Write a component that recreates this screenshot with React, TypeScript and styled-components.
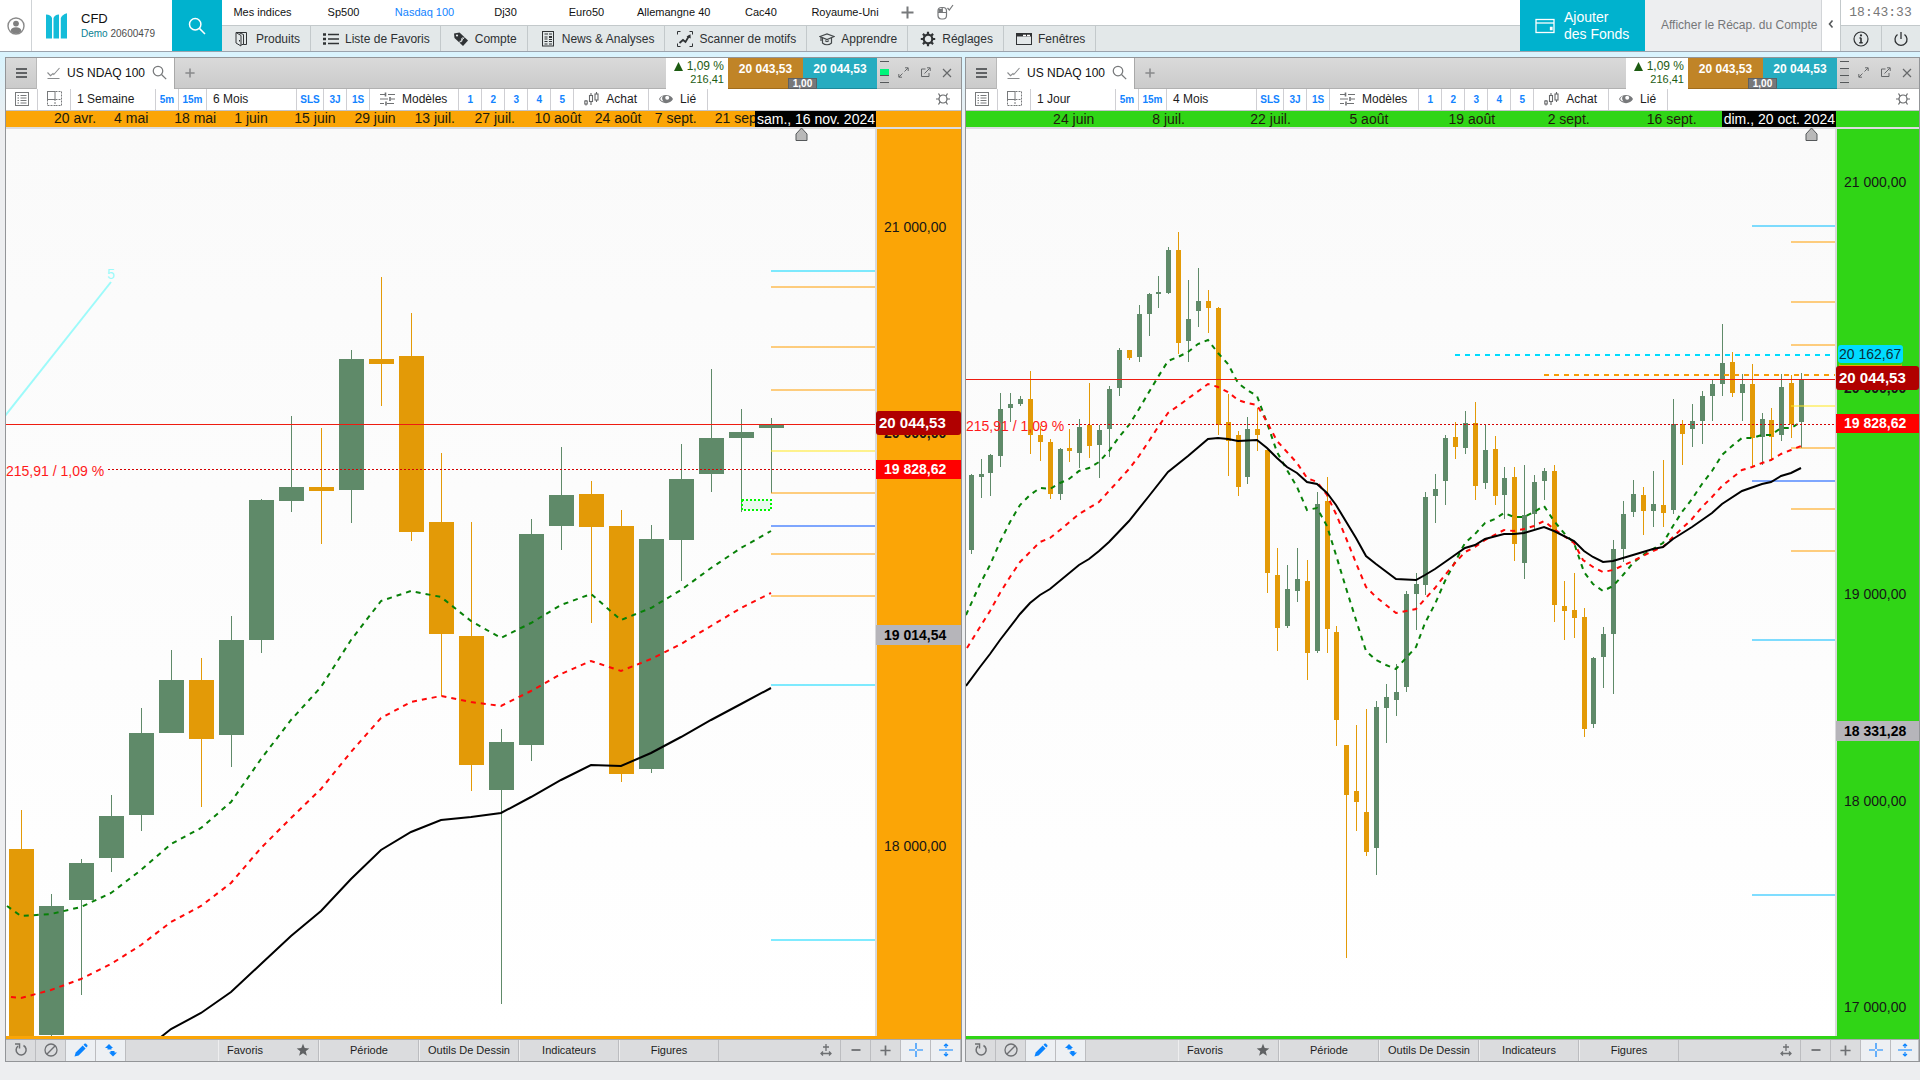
import React from "react";
import styled, { createGlobalStyle, css } from "styled-components";

/* ------------------------------------------------------------------ */
/* Types and data                                                      */
/* ------------------------------------------------------------------ */

type Point = [number, number];
/** x of the wick, rising (1) or falling (0), high, body top, body bottom, low */
type Candle = [number, 0 | 1, number, number, number, number];

interface Level {
  from: number;
  y: number;
  color: string;
}

interface AxisTag {
  y: number;
  text: string;
  kind: "plain" | "bold" | "current" | "previous" | "cursor" | "line";
}

interface DateLabel {
  x: number;
  text: string;
}

interface ChartData {
  title: string;
  interval: string;
  range: string;
  accent: string;
  axisWidth: number;
  originX: number;
  bodyWidth: number;
  labelHeight: number;
  signalOn: boolean;
  dates: DateLabel[];
  cursorDate: string;
  markerX: number;
  candles: Candle[];
  fast: Point[];
  medium: Point[];
  slow: Point[];
  levels: Level[];
  dashed: Level[];
  currentY: number;
  previousY: number;
  axis: AxisTag[];
  wave?: { from: Point; to: Point; text: string };
  zone?: { x: number; y: number; width: number; height: number };
}

const PLOT_TOP = 129;
const PLOT_WIDTH = 869;
const PLOT_HEIGHT = 907;

const CYAN = "rgba(0, 215, 255, 0.5)";
const SKY = "rgba(0, 187, 255, 0.5)";
const AMBER = "rgba(255, 157, 0, 0.5)";
const YELLOW = "rgba(255, 232, 30, 0.5)";
const BLUE = "rgba(0, 80, 255, 0.5)";

const weeklyXs = (values: number[], first = 0): Point[] =>
  values.map((y, i) => [21 + 30 * (first + i), y]);

const weekly: ChartData = {
  title: "US NDAQ 100",
  interval: "1 Semaine",
  range: "6 Mois",
  accent: "#fba506",
  axisWidth: 84,
  originX: 6,
  bodyWidth: 25,
  labelHeight: 14,
  signalOn: true,
  dates: [
    { x: 54, text: "20 avr." },
    { x: 114, text: "4 mai" },
    { x: 174, text: "18 mai" },
    { x: 234, text: "1 juin" },
    { x: 294, text: "15 juin" },
    { x: 354, text: "29 juin" },
    { x: 414, text: "13 juil." },
    { x: 474, text: "27 juil." },
    { x: 534, text: "10 août" },
    { x: 594, text: "24 août" },
    { x: 654, text: "7 sept." },
    { x: 714, text: "21 sept." },
  ],
  cursorDate: "sam., 16 nov. 2024",
  markerX: 801,
  candles: [
    [21, 0, 810, 849, 1040, 1040],
    [51, 1, 894, 906, 1035, 1036],
    [81, 1, 859, 863, 900, 995],
    [111, 1, 795, 816, 858, 872],
    [141, 1, 708, 733, 815, 831],
    [171, 1, 650, 680, 733, 733],
    [201, 0, 658, 680, 739, 807],
    [231, 1, 616, 640, 735, 767],
    [261, 1, 499, 500, 640, 653],
    [291, 1, 416, 487, 501, 512],
    [321, 0, 428, 487, 491, 544],
    [351, 1, 350, 359, 490, 523],
    [381, 0, 277, 359, 364, 406],
    [411, 0, 313, 356, 532, 541],
    [441, 0, 453, 522, 634, 696],
    [471, 0, 522, 636, 765, 791],
    [501, 1, 729, 742, 790, 1004],
    [531, 1, 519, 534, 745, 761],
    [561, 1, 447, 495, 526, 550],
    [591, 0, 481, 494, 527, 623],
    [621, 0, 510, 526, 774, 782],
    [651, 1, 525, 539, 769, 773],
    [681, 1, 444, 479, 540, 581],
    [711, 1, 369, 438, 474, 492],
    [741, 1, 409, 432, 438, 512],
    [771, 1, 418, 425, 428, 493],
  ],
  fast: [
    [7, 906],
    ...weeklyXs([
      916, 914, 907, 893, 870, 844, 828, 802, 759, 720, 687, 640, 601, 591, 597, 621, 638, 623,
      605, 594, 620, 608, 590, 568, 548, 531,
    ]),
  ],
  medium: [
    [11, 997],
    ...weeklyXs([
      998, 990, 979, 964, 945, 922, 906, 883, 848, 818, 789, 752, 718, 702, 696, 702, 706, 691,
      674, 661, 671, 659, 644, 626, 608, 593,
    ]),
  ],
  slow: [
    [161, 1037],
    ...weeklyXs(
      [
        1029, 1013, 992, 964, 936, 911, 879, 850, 832, 820, 817, 813, 797, 780, 765, 766, 753, 737,
        720, 704, 688,
      ],
      5
    ),
  ],
  levels: [
    { from: 771, y: 271, color: CYAN },
    { from: 771, y: 287, color: AMBER },
    { from: 771, y: 347, color: AMBER },
    { from: 771, y: 390, color: AMBER },
    { from: 771, y: 451, color: YELLOW },
    { from: 771, y: 493, color: AMBER },
    { from: 771, y: 526, color: BLUE },
    { from: 771, y: 554, color: AMBER },
    { from: 771, y: 596, color: AMBER },
    { from: 771, y: 685, color: CYAN },
    { from: 771, y: 940, color: CYAN },
  ],
  dashed: [],
  currentY: 424,
  previousY: 469,
  axis: [
    { y: 227, text: "21 000,00", kind: "plain" },
    { y: 433, text: "20 000,00", kind: "bold" },
    { y: 846, text: "18 000,00", kind: "plain" },
    { y: 423, text: "20 044,53", kind: "current" },
    { y: 469, text: "19 828,62", kind: "previous" },
    { y: 635, text: "19 014,54", kind: "cursor" },
  ],
  wave: { from: [5, 416], to: [111, 282], text: "5" },
  zone: { x: 742, y: 500, width: 29, height: 10 },
};

const daily: ChartData = {
  title: "US NDAQ 100",
  interval: "1 Jour",
  range: "4 Mois",
  accent: "#30d516",
  axisWidth: 82,
  originX: 966,
  bodyWidth: 5,
  labelHeight: 16,
  signalOn: false,
  dates: [
    { x: 1053, text: "24 juin" },
    { x: 1152, text: "8 juil." },
    { x: 1250, text: "22 juil." },
    { x: 1349, text: "5 août" },
    { x: 1448, text: "19 août" },
    { x: 1547, text: "2 sept." },
    { x: 1646, text: "16 sept." },
  ],
  cursorDate: "dim., 20 oct. 2024",
  markerX: 1811,
  candles: [
    [971, 1, 474, 475, 550, 554],
    [981, 1, 459, 474, 477, 498],
    [990, 1, 454, 455, 473, 496],
    [1000, 1, 393, 409, 456, 467],
    [1010, 1, 393, 404, 408, 422],
    [1020, 1, 396, 399, 404, 406],
    [1030, 0, 371, 399, 435, 454],
    [1040, 0, 426, 435, 442, 461],
    [1050, 0, 439, 442, 494, 499],
    [1060, 1, 448, 449, 494, 500],
    [1069, 0, 429, 448, 451, 462],
    [1079, 1, 419, 427, 453, 468],
    [1089, 0, 383, 425, 446, 458],
    [1099, 1, 425, 430, 445, 478],
    [1109, 1, 386, 389, 429, 457],
    [1119, 1, 348, 350, 388, 396],
    [1129, 0, 350, 350, 358, 360],
    [1139, 1, 305, 314, 357, 362],
    [1149, 1, 293, 294, 314, 336],
    [1158, 1, 276, 292, 294, 308],
    [1168, 1, 247, 250, 293, 294],
    [1178, 0, 232, 250, 343, 354],
    [1188, 1, 280, 319, 341, 362],
    [1198, 1, 268, 301, 311, 327],
    [1208, 0, 290, 301, 308, 333],
    [1218, 0, 307, 308, 425, 435],
    [1228, 0, 394, 422, 441, 476],
    [1238, 0, 431, 435, 487, 496],
    [1247, 1, 417, 429, 477, 484],
    [1257, 0, 408, 429, 435, 451],
    [1267, 0, 450, 450, 573, 593],
    [1277, 0, 548, 575, 628, 651],
    [1287, 1, 565, 589, 626, 628],
    [1297, 1, 548, 579, 591, 602],
    [1307, 0, 560, 581, 653, 680],
    [1317, 1, 492, 504, 651, 653],
    [1327, 0, 477, 501, 629, 653],
    [1336, 0, 626, 632, 720, 746],
    [1346, 0, 745, 745, 795, 958],
    [1356, 0, 725, 791, 802, 831],
    [1366, 0, 709, 812, 852, 856],
    [1376, 1, 701, 707, 848, 875],
    [1386, 1, 684, 697, 708, 743],
    [1396, 1, 664, 692, 700, 716],
    [1406, 1, 591, 594, 687, 692],
    [1416, 1, 573, 584, 594, 630],
    [1425, 1, 492, 497, 585, 595],
    [1435, 1, 474, 489, 496, 523],
    [1445, 1, 435, 438, 481, 505],
    [1455, 0, 422, 437, 447, 459],
    [1465, 1, 411, 423, 448, 454],
    [1475, 0, 402, 423, 486, 500],
    [1485, 1, 425, 450, 483, 489],
    [1495, 0, 436, 449, 496, 505],
    [1504, 1, 467, 478, 495, 519],
    [1514, 0, 467, 477, 544, 561],
    [1524, 1, 465, 515, 563, 579],
    [1534, 1, 475, 482, 514, 529],
    [1544, 1, 468, 471, 481, 500],
    [1554, 0, 465, 471, 605, 622],
    [1564, 0, 581, 606, 611, 640],
    [1574, 0, 573, 610, 618, 638],
    [1584, 0, 608, 617, 729, 737],
    [1593, 1, 657, 658, 724, 728],
    [1603, 1, 627, 634, 657, 688],
    [1613, 1, 540, 549, 634, 694],
    [1623, 1, 501, 514, 549, 562],
    [1633, 1, 480, 494, 512, 517],
    [1643, 0, 487, 495, 511, 535],
    [1653, 1, 471, 504, 511, 527],
    [1663, 0, 460, 505, 513, 527],
    [1673, 1, 399, 424, 510, 514],
    [1682, 0, 420, 424, 434, 465],
    [1692, 1, 404, 421, 429, 447],
    [1702, 1, 391, 396, 421, 444],
    [1712, 1, 380, 384, 396, 421],
    [1722, 1, 324, 363, 384, 396],
    [1732, 0, 352, 362, 393, 397],
    [1742, 1, 374, 384, 393, 421],
    [1752, 0, 364, 384, 438, 467],
    [1762, 1, 413, 419, 437, 465],
    [1771, 0, 408, 420, 437, 461],
    [1781, 1, 374, 387, 435, 441],
    [1791, 0, 375, 383, 424, 438],
    [1801, 1, 373, 379, 422, 448],
  ],
  fast: [
    [966, 615], [980, 584], [990, 565], [1000, 542], [1010, 522], [1020, 505], [1030, 495],
    [1040, 488], [1050, 489], [1060, 483], [1069, 479], [1079, 471], [1089, 468], [1099, 462],
    [1109, 451], [1119, 437], [1129, 425], [1139, 409], [1149, 392], [1158, 377], [1168, 361],
    [1178, 357], [1188, 352], [1198, 344], [1208, 340], [1218, 353], [1228, 364], [1238, 383],
    [1247, 390], [1257, 396], [1267, 423], [1277, 452], [1287, 470], [1297, 487], [1307, 510],
    [1317, 508], [1327, 526], [1336, 555], [1346, 588], [1356, 620], [1366, 651], [1376, 660],
    [1386, 665], [1396, 669], [1406, 658], [1416, 647], [1425, 623], [1435, 604], [1445, 581],
    [1455, 562], [1465, 543], [1475, 534], [1485, 523], [1495, 519], [1504, 513], [1514, 517],
    [1524, 517], [1534, 512], [1544, 506], [1554, 521], [1564, 533], [1574, 543], [1584, 572],
    [1593, 584], [1603, 591], [1613, 586], [1623, 575], [1633, 563], [1643, 555], [1653, 549],
    [1663, 543], [1673, 526], [1682, 512], [1692, 499], [1702, 484], [1712, 471], [1722, 455],
    [1732, 446], [1742, 438], [1752, 438], [1762, 435], [1771, 435], [1781, 428], [1791, 428],
    [1801, 422],
  ],
  medium: [
    [967, 648], [980, 627], [990, 611], [1000, 593], [1010, 577], [1020, 562], [1040, 542],
    [1050, 538], [1060, 530], [1079, 514], [1089, 508], [1099, 502], [1109, 491], [1129, 469],
    [1139, 456], [1149, 441], [1158, 427], [1168, 413], [1178, 406], [1208, 384], [1218, 387],
    [1228, 392], [1238, 400], [1247, 403], [1257, 405], [1267, 422], [1277, 441], [1287, 452],
    [1297, 463], [1307, 478], [1317, 482], [1327, 495], [1336, 514], [1346, 538], [1356, 563],
    [1366, 587], [1376, 597], [1386, 605], [1396, 613], [1416, 609], [1425, 599], [1435, 588],
    [1445, 575], [1455, 563], [1465, 552], [1475, 547], [1485, 540], [1504, 530], [1514, 531],
    [1524, 529], [1534, 526], [1544, 521], [1554, 529], [1574, 543], [1583, 560], [1593, 567],
    [1603, 572], [1613, 570], [1633, 561], [1653, 551], [1663, 547], [1673, 537], [1692, 519],
    [1702, 507], [1712, 497], [1722, 486], [1742, 470], [1752, 467], [1762, 463], [1771, 460],
    [1781, 454], [1791, 450], [1801, 446],
  ],
  slow: [
    [966, 686], [980, 667], [990, 654], [1000, 640], [1020, 614], [1030, 603], [1040, 595],
    [1050, 589], [1079, 565], [1089, 559], [1099, 551], [1109, 542], [1129, 521], [1149, 496],
    [1168, 472], [1188, 456], [1208, 439], [1218, 438], [1228, 439], [1238, 441], [1257, 440],
    [1267, 448], [1277, 458], [1287, 467], [1297, 473], [1307, 482], [1317, 484], [1327, 493],
    [1336, 505], [1356, 538], [1366, 556], [1376, 564], [1396, 579], [1416, 580], [1425, 575],
    [1435, 569], [1445, 562], [1465, 548], [1475, 545], [1485, 539], [1504, 534], [1514, 534],
    [1524, 533], [1544, 527], [1554, 531], [1574, 541], [1584, 551], [1593, 557], [1603, 562],
    [1613, 561], [1633, 555], [1653, 549], [1663, 547], [1673, 539], [1692, 527], [1712, 513],
    [1722, 504], [1742, 491], [1762, 484], [1771, 482], [1781, 476], [1791, 473], [1801, 468],
  ],
  levels: [
    { from: 1752, y: 226, color: SKY },
    { from: 1791, y: 242, color: AMBER },
    { from: 1791, y: 302, color: AMBER },
    { from: 1791, y: 345, color: AMBER },
    { from: 1791, y: 406, color: YELLOW },
    { from: 1791, y: 448, color: AMBER },
    { from: 1752, y: 481, color: BLUE },
    { from: 1791, y: 509, color: AMBER },
    { from: 1791, y: 551, color: AMBER },
    { from: 1752, y: 640, color: SKY },
    { from: 1752, y: 895, color: SKY },
  ],
  dashed: [
    { from: 1455, y: 355, color: "#00dcff" },
    { from: 1544, y: 375, color: "#f79d06" },
  ],
  currentY: 379,
  previousY: 424,
  axis: [
    { y: 182, text: "21 000,00", kind: "plain" },
    { y: 388, text: "20 000,00", kind: "bold" },
    { y: 594, text: "19 000,00", kind: "plain" },
    { y: 801, text: "18 000,00", kind: "plain" },
    { y: 1007, text: "17 000,00", kind: "plain" },
    { y: 354, text: "20 162,67", kind: "line" },
    { y: 378, text: "20 044,53", kind: "current" },
    { y: 423, text: "19 828,62", kind: "previous" },
    { y: 731, text: "18 331,28", kind: "cursor" },
  ],
};

/* ------------------------------------------------------------------ */
/* Styles                                                              */
/* ------------------------------------------------------------------ */

const GlobalStyle = createGlobalStyle`
  * { box-sizing: border-box; }
  body {
    margin: 0;
    font-family: "Liberation Sans", Arial, sans-serif;
    font-size: 12px;
    color: #1c1c1c;
    background: #edeef0;
  }
  button {
    margin: 0;
    padding: 0;
    border: 0;
    background: none;
    color: inherit;
    font: inherit;
    white-space: nowrap;
    cursor: pointer;
  }
  svg { display: block; flex: none; }
`;

const Page = styled.div`
  display: flex;
  flex-direction: column;
  min-height: 100vh;
  background: linear-gradient(#d9f3fd 56px, #edeef0 128px);
`;

const Header = styled.header`
  display: flex;
  height: 52px;
  background: #fff;
  border-bottom: 1px solid #9ba3ad;
`;

const UserButton = styled.button`
  display: flex;
  align-items: center;
  justify-content: center;
  width: 32px;
  border-right: 1px solid #cfd3d6;
`;

const Brand = styled.div`
  display: flex;
  align-items: center;
  gap: 14px;
  width: 140px;
  padding-left: 14px;
`;

const AccountName = styled.div`
  font-size: 13px;
  line-height: 16px;
  color: #111;
`;

const AccountNumber = styled.div`
  font-size: 10px;
  line-height: 14px;
  white-space: nowrap;
  color: #4c4c4c;
  span { color: #0a7f93; }
`;

const SearchButton = styled.button`
  display: flex;
  align-items: center;
  justify-content: center;
  width: 50px;
  background: #00b2ce;
`;

const Navigation = styled.div`
  display: flex;
  flex: 1;
  flex-direction: column;
  min-width: 0;
`;

const QuickLinks = styled.nav`
  display: flex;
  height: 26px;
  border-bottom: 1px solid #c3c9cb;
`;

const QuickLink = styled.a<{ $active?: boolean }>`
  min-width: 81px;
  padding: 0 10px;
  font-size: 11px;
  line-height: 25px;
  text-align: center;
  text-decoration: none;
  white-space: nowrap;
  color: ${(p) => (p.$active ? "#1283ff" : "#111")};
`;

const QuickAction = styled.button`
  display: flex;
  align-items: center;
  justify-content: center;
  width: 38px;
`;

const MainMenu = styled.nav`
  display: flex;
  flex: 1;
  background: #e3e8e9;
`;

const MenuButton = styled.button`
  display: flex;
  align-items: center;
  gap: 6px;
  padding: 0 10px 0 12px;
  border-right: 1px solid #c3c9cb;
  color: #2e3133;
`;

const FundsButton = styled.button`
  display: flex;
  align-items: center;
  gap: 9px;
  width: 125px;
  padding-left: 15px;
  background: #00b2ce;
  color: #fff;
  font-size: 14px;
  line-height: 17px;
  text-align: left;
`;

const RecapButton = styled.button`
  width: 177px;
  padding: 0 10px 2px 16px;
  background: #edeef0;
  border-right: 1px solid #d2d5d8;
  color: #757779;
`;

const CollapseButton = styled.button`
  display: flex;
  align-items: center;
  justify-content: center;
  width: 19px;
  padding-bottom: 4px;
  border-right: 1px solid #c3c9cb;
`;

const Status = styled.div`
  display: flex;
  flex-direction: column;
  width: 79px;
`;

const Clock = styled.time`
  height: 26px;
  border-bottom: 1px solid #c3c9cb;
  font-family: "Liberation Mono", monospace;
  font-size: 13px;
  line-height: 26px;
  text-align: center;
  color: #777;
`;

const StatusActions = styled.div`
  display: grid;
  flex: 1;
  grid-template-columns: 1fr 1fr;
  background: #e3e8e9;
`;

const StatusButton = styled.button`
  display: flex;
  align-items: center;
  justify-content: center;
  & + & { border-left: 1px solid #c3c9cb; }
`;

const Workspace = styled.main`
  display: grid;
  flex: 1;
  grid-template-columns: minmax(0, 957fr) minmax(0, 955fr);
  gap: 3px;
  padding: 5px 0 18px 5px;
`;

const Panel = styled.section`
  display: flex;
  flex-direction: column;
  min-width: 0;
  min-height: 600px;
  border: 1px solid #939598;
  background: #fff;
`;

const TabBar = styled.div`
  display: flex;
  height: 31px;
  background: linear-gradient(#dadada, #cacaca);
  box-shadow: inset 0 -1px #b1b1b1;
`;

const TabMenuButton = styled.button`
  display: flex;
  align-items: center;
  justify-content: center;
  width: 31px;
  padding-bottom: 2px;
  border-right: 1px solid #b9b9b9;
`;

const Tab = styled.button`
  display: flex;
  align-items: center;
  gap: 7px;
  width: 138px;
  padding: 0 0 2px 10px;
  background: #fff;
  border-right: 1px solid #a9a9a9;
  color: #111;
`;

const AddTabButton = styled.button`
  display: flex;
  align-items: center;
  justify-content: center;
  width: 30px;
  padding-bottom: 2px;
`;

const Spacer = styled.div`
  flex: 1;
`;

const Change = styled.div`
  display: flex;
  flex-direction: column;
  align-items: flex-end;
  width: 62px;
  padding: 2px 4px 0 0;
  background: #fff;
  color: #1d5c12;
  font-size: 11px;
  line-height: 13px;
`;

const ChangePercent = styled.div`
  display: flex;
  align-items: center;
  gap: 4px;
  font-size: 12px;
`;

const Quote = styled.div`
  position: relative;
  display: grid;
  grid-template-columns: 75px 74px;
`;

const QuoteButton = styled.button<{ $side: "sell" | "buy" }>`
  padding-bottom: 8px;
  background: ${(p) => (p.$side === "sell" ? "#c08427" : "#27acc0")};
  border-bottom: 1px solid ${(p) => (p.$side === "sell" ? "#a06c1c" : "#1d8a9b")};
  color: #fff;
  font-weight: bold;
`;

const Spread = styled.span`
  position: absolute;
  bottom: 0;
  left: 60px;
  width: 29px;
  height: 11px;
  border: 1px solid #5d6063;
  background: #76787b;
  color: #fff;
  font-size: 10px;
  font-weight: bold;
  line-height: 10px;
  text-align: center;
`;

const WindowTools = styled.div<{ $width: number }>`
  display: flex;
  align-items: center;
  width: ${(p) => p.$width}px;
  padding: 0 0 2px 2px;
`;

const WindowButton = styled.button`
  display: flex;
  align-items: center;
  justify-content: center;
  width: 22px;
  height: 22px;
  &:first-of-type { margin-left: 2px; }
`;

const Toolbar = styled.div`
  display: flex;
  height: 22px;
  border-bottom: 1px solid #c4c4c8;
  background: #fff;
`;

const toolCell = css`
  display: flex;
  align-items: center;
  padding-bottom: 2px;
  border-right: 1px solid #cfcfd3;
`;

const IconCell = styled.button<{ $width: number }>`
  ${toolCell}
  justify-content: center;
  width: ${(p) => p.$width}px;
`;

const TextCell = styled.button<{ $width: number }>`
  ${toolCell}
  width: ${(p) => p.$width}px;
  padding-left: 6px;
`;

const ShortcutCell = styled.button<{ $width: number }>`
  ${toolCell}
  justify-content: center;
  width: ${(p) => p.$width}px;
  padding-bottom: 0;
  color: #1283ff;
  font-size: 10px;
  font-weight: bold;
`;

const ActionCell = styled.button`
  ${toolCell}
  gap: 7px;
  padding-right: 11px;
  padding-left: 10px;
`;

const SettingsSlot = styled.div<{ $width: number }>`
  display: flex;
  align-items: center;
  width: ${(p) => p.$width}px;
  padding-bottom: 2px;
  padding-left: 58px;
`;

const DateStrip = styled.div<{ $accent: string }>`
  display: flex;
  height: 18px;
  border-bottom: 2px solid #dcdcde;
  background: ${(p) => p.$accent};
`;

const DateTrack = styled.div`
  position: relative;
  flex: 1;
`;

const DateTick = styled.span<{ $height: number }>`
  position: absolute;
  top: 0;
  font-size: 14px;
  line-height: ${(p) => p.$height}px;
  white-space: nowrap;
  color: #201a0c;
`;

const CursorDate = styled.span`
  position: absolute;
  top: 0;
  right: 0;
  padding: 0 1px 0 2px;
  background: #000;
  color: #fff;
  font-size: 14px;
  line-height: 16px;
  white-space: nowrap;
`;

const AxisCorner = styled.div<{ $width: number }>`
  width: ${(p) => p.$width + 1}px;
`;

const ChartBody = styled.div<{ $accent: string }>`
  display: flex;
  flex: 1;
  border-bottom: 3px solid ${(p) => p.$accent};
`;

const Plot = styled.div`
  position: relative;
  flex: 1;
  min-width: 0;
  background: linear-gradient(#fafafa, #fff);
`;

const PlotDrawing = styled.svg`
  position: absolute;
  top: 0;
  left: 0;
  width: 100%;
  height: 100%;
`;

const ChangeNote = styled.span`
  position: absolute;
  left: 0;
  font-size: 14px;
  line-height: 16px;
  white-space: nowrap;
  color: #ff1a1a;
`;

const WaveNote = styled.span`
  position: absolute;
  font-size: 14px;
  line-height: 16px;
  color: #9dfafa;
`;

const Marker = styled.svg`
  position: absolute;
  top: -2px;
`;

const Axis = styled.div<{ $accent: string; $width: number }>`
  position: relative;
  width: ${(p) => p.$width + 2}px;
  border-left: 2px solid #d9d9db;
  background: ${(p) => p.$accent};
`;

const tagKinds = {
  plain: css`
    left: 7px;
    line-height: 16px;
    color: #161616;
  `,
  bold: css`
    left: 7px;
    line-height: 16px;
    font-weight: bold;
    color: #161616;
  `,
  current: css`
    left: -1px;
    right: 0;
    padding-left: 3px;
    border-radius: 3px;
    background: #b00000;
    color: #fff;
    font-size: 15px;
    font-weight: bold;
    line-height: 24px;
  `,
  previous: css`
    left: -1px;
    right: 0;
    padding-left: 8px;
    background: #ff0000;
    color: #fff;
    font-weight: bold;
    line-height: 19px;
  `,
  cursor: css`
    left: -1px;
    right: 0;
    padding-left: 8px;
    background: #b6b5ba;
    color: #000;
    font-weight: bold;
    line-height: 20px;
  `,
  line: css`
    left: 1px;
    padding: 0 2px 0 1px;
    border-radius: 3px;
    background: #00dcff;
    color: #08303a;
    line-height: 18px;
    box-shadow: 0 3px 0 -1px #30d516, 0 5px 0 -1px #f79d06;
  `,
};

const tagHeights: Record<AxisTag["kind"], number> = {
  plain: 16,
  bold: 16,
  current: 24,
  previous: 19,
  cursor: 20,
  line: 18,
};

const Tag = styled.span<{ $kind: AxisTag["kind"] }>`
  position: absolute;
  font-size: 14px;
  white-space: nowrap;
  ${(p) => tagKinds[p.$kind]}
`;

const BottomBar = styled.div`
  display: flex;
  height: 22px;
  border-top: 1px solid #a9aaad;
  background: #dbdcde;
`;

const BottomIcon = styled.button<{ $on?: boolean; $width?: number }>`
  display: flex;
  align-items: center;
  justify-content: center;
  width: ${(p) => p.$width ?? 30}px;
  padding-bottom: 1px;
  border-right: 1px solid #bcbdc0;
  background: ${(p) => (p.$on ? "#edf0f3" : "transparent")};
  color: ${(p) => (p.$on ? "#0a84ff" : "#6d6f72")};
`;

const BottomTabs = styled.div`
  display: grid;
  grid-template-columns: repeat(5, 100px);
  border-left: 1px solid #eeeeef;
`;

const BottomTab = styled.button<{ $spread?: boolean }>`
  display: flex;
  align-items: center;
  justify-content: ${(p) => (p.$spread ? "space-between" : "center")};
  padding: ${(p) => (p.$spread ? "0 8px 2px 8px" : "0 0 2px")};
  border-right: 1px solid #bcbdc0;
  font-size: 11px;
  color: #1c1c1c;
  &:not(:first-child) { border-left: 1px solid #eeeeef; }
`;

/* ------------------------------------------------------------------ */
/* Icons                                                               */
/* ------------------------------------------------------------------ */

interface IconProps {
  w?: number;
  h?: number;
  color?: string;
  sw?: number;
  children: React.ReactNode;
}

const Icon = ({ w = 16, h = 16, color = "currentColor", sw = 1, children }: IconProps) => (
  <svg width={w} height={h} viewBox={`0 0 ${w} ${h}`} fill="none" stroke={color} strokeWidth={sw} aria-hidden="true">
    {children}
  </svg>
);

const UserIcon = () => (
  <Icon w={18} h={18} color="#8a8a8a" sw={1.4}>
    <circle cx="9" cy="9" r="8" />
    <circle cx="9" cy="6.6" r="2.9" fill="#808080" stroke="none" />
    <path d="M3.6 14.2c.3-3 2.2-4 5.4-4s5.1 1 5.4 4c-1.5 1.6-3.3 2.300-5.4 2.300s-3.900-.7-5.400-2.300z" fill="#808080" stroke="none" />
  </Icon>
);

const LogoIcon = () => (
  <Icon w={21} h={26} color="none">
    <path d="M0 1.500c3.500.3 5 1.200 6 3.500v20.500H0z" fill="#14bcd9" />
    <path d="M7.500 5C8.500 2.700 10 1.800 13 1.500v24H7.500z" fill="#14bcd9" />
    <path d="M14.800 5C15.800 2.700 17.500 1.200 21 .2v25.300h-6.200z" fill="#14bcd9" />
  </Icon>
);

const SearchIcon = ({ color = "#fff", size = 18 }: { color?: string; size?: number }) => (
  <svg width={size} height={size} viewBox="0 0 18 18" fill="none" stroke={color} strokeWidth="1.5" aria-hidden="true">
    <circle cx="7.2" cy="7.2" r="5.700" />
    <path d="M11.400 11.400l5.600 5.600" />
  </svg>
);

const ProductsIcon = () => (
  <Icon color="#303335">
    <path d="M9.500 13.500h3v-12H2v10.500l5 3V4.500l-5-3" />
    <path d="M4.500 1.500l5 2v10h-2" />
    <path d="M5.500 9v1.500" />
  </Icon>
);

const ListIcon = () => (
  <Icon color="#303335" sw={1.6}>
    <path d="M5 3.500h11M5 8h11M5 12.500h11" />
    <path d="M0 3.500h3M0 8h3M0 12.500h3" strokeWidth="2.4" />
  </Icon>
);

const AccountIcon = () => (
  <Icon color="none">
    <path d="M1 2.500L6.500 1.500l8.500 8-5 5.500L1.500 7z" fill="#303335" />
    <circle cx="4" cy="4.500" r="1.1" fill="#e3e8e9" />
    <path d="M10.800 7.300c-1.600-1.200-2.800.4-2 1.600s-.5 2.800-2 1.400M11.400 6.500l-5.200 5" stroke="#e3e8e9" strokeWidth="1" />
  </Icon>
);

const NewsIcon = () => (
  <Icon color="#303335">
    <rect x="2.500" y="0.500" width="11" height="14.500" />
    <path d="M4.500 3h3.500M9 3h3M4.500 6h3M4.500 8h3M4.500 10.500h3M4.500 13h3M9 8.500h3M9 10.500h3M9 13h3" strokeWidth="1.2" />
    <rect x="9" y="5" width="3" height="2" fill="#303335" stroke="none" />
  </Icon>
);

const ScannerIcon = () => (
  <Icon color="#303335">
    <path d="M.5 3.500v-3h3M12.500.5h3v3M15.500 12.500v3h-3M3.500 15.500h-3v-3" />
    <path d="M2.500 12l3.500-3 2.500 2L12 5" strokeWidth="1.8" />
    <path d="M9.500 5.500l4-2.200.2 4.200z" fill="#303335" stroke="none" />
  </Icon>
);

const LearnIcon = () => (
  <Icon color="#45494b" sw={1.2}>
    <path d="M1 5.500L8 3l7 2.500L8 8.500z" />
    <path d="M3.500 7v5c2.500 2.300 6.500 2.300 9 0V7M2 6v4" />
    <path d="M6 9.800l2 .8 2-.8" />
  </Icon>
);

const GearIcon = () => (
  <Icon color="#303335">
    <circle cx="8" cy="8" r="4.300" strokeWidth="2.200" />
    <path d="M8 .8v2.600M8 12.600v2.600M.8 8h2.600M12.600 8h2.600M2.900 2.900l1.900 1.900M11.200 11.200l1.900 1.900M2.900 13.100l1.900-1.900M11.200 4.800l1.900-1.900" strokeWidth="2.200" />
  </Icon>
);

const WindowsIcon = () => (
  <Icon color="#303335">
    <rect x=".5" y="2.500" width="15" height="11" />
    <path d="M.5 4h15" strokeWidth="3" />
    <path d="M7 4.500h3M11 4.500h3" stroke="#fff" strokeWidth="1.500" />
  </Icon>
);

const PlusIcon = ({ size = 13, color = "#77797b" }: { size?: number; color?: string }) => (
  <svg width={size} height={size} viewBox="0 0 13 13" stroke={color} strokeWidth="2" aria-hidden="true">
    <path d="M6.500 .5v12M.5 6.500h12" />
  </svg>
);

const MouseIcon = () => (
  <Icon w={17} h={17} color="#77797b" sw={1.2}>
    <rect x="1" y="3.500" width="8.500" height="11.500" rx="3.500" />
    <path d="M5.200 3.500v5M1 8.500h8.500" />
    <path d="M2 5.500h3v3H2z" fill="#77797b" />
    <path d="M10.500 4l1.800 2L16 1" />
  </Icon>
);

const WalletIcon = () => (
  <Icon w={20} h={16} color="#fff" sw={1.3}>
    <rect x="1" y="1.500" width="18" height="13" />
    <path d="M1 5h18" />
    <path d="M15.500 9.500h1.500v2h-1.500z" fill="#fff" />
  </Icon>
);

const InfoIcon = () => (
  <Icon color="#2e3133" sw={1.2}>
    <circle cx="8" cy="8" r="7" />
    <path d="M8 6.800v5M6.500 7h1.500M6.300 11.800h3.400" strokeWidth="1.600" />
    <circle cx="8" cy="4.400" r="1.100" fill="#2e3133" stroke="none" />
  </Icon>
);

const PowerIcon = () => (
  <Icon color="#2e3133" sw={1.3}>
    <path d="M8 1v7M4.500 3.500a6 6 0 1 0 7 0" />
  </Icon>
);

const HamburgerIcon = () => (
  <Icon w={11} h={12} color="#606264" sw={2}>
    <path d="M0 2h11M0 6h11M0 10h11" />
  </Icon>
);

const TrendIcon = () => (
  <Icon w={13} h={14} color="#8a8c8e" sw={1.1}>
    <path d="M.5 6.500l3 3.200L6 7.500l.8 1L12.500 2M.5 12.500h12" />
  </Icon>
);

const DetailsIcon = () => (
  <Icon w={14} h={14} color="#77797b">
    <rect x=".5" y=".5" width="13" height="13" />
    <path d="M2.500 3.500h1.500M5.500 3.500h6M2.500 6h1.500M5.500 6h6M2.500 8.500h1.500M5.500 8.500h6M2.500 11h1.500M5.500 11h6" />
  </Icon>
);

const LayoutIcon = () => (
  <Icon w={15} h={15} color="#77797b">
    <rect x=".5" y=".5" width="7.500" height="8" />
    <path d="M8.500 .5h6v8h-6M.5 8.500v6h7.500v-6M8.500 14.500h6v-6" strokeDasharray="2 1" />
  </Icon>
);

const SlidersIcon = () => (
  <Icon w={15} h={14} color="#6f7173" sw={1.2}>
    <path d="M0 2.500h5M8 2.500h7M0 7h8M11 7h4M0 11.500h4M7 11.500h7" />
    <path d="M5.500 .5v4M10 5v4M6 9.500v4" strokeWidth="1.600" />
  </Icon>
);

const CandlesIcon = () => (
  <Icon w={15} h={14} color="#66686a" sw={1.1}>
    <path d="M2 8v1M2 12v1.500M7 1v2.500M7 9.500V13M12.500 0v2M12.500 8v2" />
    <rect x=".8" y="9" width="2.400" height="3" />
    <rect x="5.500" y="3.500" width="3" height="6" />
    <rect x="11" y="2" width="3" height="6" />
  </Icon>
);

const EyeIcon = () => (
  <Icon w={14} h={12} color="none">
    <path d="M0 6C2.500.5 11.500.5 14 6 11.500 11.500 2.500 11.500 0 6z" fill="#77797b" />
    <path d="M4 2.800C2.500 5 3 7 4.500 8.500 2.500 8 1.500 7 1.200 6 1.700 4.500 2.800 3.400 4 2.800z" fill="#fff" />
    <circle cx="8.200" cy="4.800" r="2" fill="#fff" />
  </Icon>
);

const CogOutlineIcon = () => (
  <Icon color="#66686a" sw={1.2}>
    <circle cx="8" cy="8" r="4" />
    <path d="M5 5L3.500 2.500M11 5l1.500-2.500M5 11l-1.500 2.500M11 11l1.500 2.500M4 8H1M12 8h3" />
  </Icon>
);

const SignalMeter = ({ on }: { on: boolean }) => (
  <Icon w={11} h={30} color="#55585a">
    <path d="M1 11h9v6H1z" fill={on ? "#00f57a" : "#c6c6c6"} stroke="none" />
    <path d="M1 18h9v5H1zM1 25h9v5H1z" fill="#c6c6c6" stroke="none" />
    <path d={`M1 3.500h9${on ? "" : "M1 10.500h9"}M1 17.500h9M1 24.500h9`} />
  </Icon>
);

const ExpandIcon = () => (
  <Icon w={11} h={11} color="#66686a">
    <path d="M6.500 4.500l3.500-3.500M7 .8h3.200V4M4.500 6.500L1 10M.8 7v3.200H4" />
  </Icon>
);

const PopOutIcon = () => (
  <Icon w={11} h={11} color="#66686a">
    <path d="M5.500 2H1.500v7.500h7.500V6M4.500 6.500L9.800 1.200M7 .8h3.200V4" />
  </Icon>
);

const CloseIcon = () => (
  <Icon w={10} h={10} color="#66686a" sw={1.2}>
    <path d="M1 1l8 8M9 1l-8 8" />
  </Icon>
);

const RedoIcon = () => (
  <Icon sw={1.5}>
    <path d="M5 4a5 5 0 1 0 5.500-.5" />
    <path d="M2 2h4.500v4.500" />
  </Icon>
);

const BlockIcon = () => (
  <Icon sw={1.3}>
    <circle cx="8" cy="8" r="6" />
    <path d="M3.800 12.200l8.400-8.400" />
  </Icon>
);

const PencilIcon = () => (
  <Icon color="none">
    <path d="M1.500 14.500l1.200-4 7-7 2.900 2.900-7 7z" fill="currentColor" />
    <path d="M10.500 2.700l1-1c1-1 3.800 1.600 2.800 2.800l-1 1z" fill="currentColor" />
  </Icon>
);

const UpDownIcon = () => (
  <Icon color="none">
    <path d="M6 2l4 4H8.500v1.500h-4V6H2z" fill="currentColor" />
    <path d="M10 14.500l-4-4h1.500V9h4v1.500H14z" fill="currentColor" />
  </Icon>
);

const StarIcon = () => (
  <Icon w={14} h={14} color="none">
    <path d="M7 .8l1.700 4.300 4.600.3-3.600 2.900 1.200 4.500L7 10.300l-3.900 2.500 1.200-4.500L.7 5.400l4.600-.3z" fill="#606264" />
  </Icon>
);

const FitIcon = () => (
  <Icon w={14} h={14} sw={1.3}>
    <path d="M7 1v7M4 4h6M2 10.500h10M4 8.500l-2 2 2 2M10 8.500l2 2-2 2" />
  </Icon>
);

const MinusIcon = () => (
  <Icon w={12} h={12} sw={1.8}>
    <path d="M1.500 6h9" />
  </Icon>
);

const CrosshairIcon = () => (
  <Icon w={14} h={14} sw={1.2}>
    <path d="M7 0v6M7 8v6M0 7h6M8 7h6" />
  </Icon>
);

const SplitIcon = () => (
  <Icon w={14} h={14} sw={1.2}>
    <path d="M0 7h14M7 1v4M7 9v4M5 3l2-2 2 2M5 11l2 2 2-2" />
  </Icon>
);

/* ------------------------------------------------------------------ */
/* Header                                                              */
/* ------------------------------------------------------------------ */

const quickLinks = ["Mes indices", "Sp500", "Nasdaq 100", "Dj30", "Euro50", "Allemangne 40", "Cac40", "Royaume-Uni"];

const menu: [string, () => React.ReactElement][] = [
  ["Produits", ProductsIcon],
  ["Liste de Favoris", ListIcon],
  ["Compte", AccountIcon],
  ["News & Analyses", NewsIcon],
  ["Scanner de motifs", ScannerIcon],
  ["Apprendre", LearnIcon],
  ["Réglages", GearIcon],
  ["Fenêtres", WindowsIcon],
];

const TopBar = () => (
  <Header>
    <UserButton aria-label="Profil"><UserIcon /></UserButton>
    <Brand>
      <LogoIcon />
      <div>
        <AccountName>CFD</AccountName>
        <AccountNumber><span>Demo</span> 20600479</AccountNumber>
      </div>
    </Brand>
    <SearchButton aria-label="Rechercher"><SearchIcon /></SearchButton>
    <Navigation>
      <QuickLinks>
        {quickLinks.map((name) => (
          <QuickLink key={name} href="#" $active={name === "Nasdaq 100"}>{name}</QuickLink>
        ))}
        <QuickAction aria-label="Ajouter"><PlusIcon /></QuickAction>
        <QuickAction aria-label="Souris"><MouseIcon /></QuickAction>
      </QuickLinks>
      <MainMenu>
        {menu.map(([name, MenuIcon]) => (
          <MenuButton key={name}><MenuIcon />{name}</MenuButton>
        ))}
      </MainMenu>
    </Navigation>
    <FundsButton><WalletIcon /><span>Ajouter<br />des Fonds</span></FundsButton>
    <RecapButton>Afficher le Récap. du Compte</RecapButton>
    <CollapseButton aria-label="Déplier">
      <Icon w={6} h={10} color="#55585a" sw={1.6}><path d="M4.500 1.500L1.500 5l3 3.500" /></Icon>
    </CollapseButton>
    <Status>
      <Clock>18:43:33</Clock>
      <StatusActions>
        <StatusButton aria-label="Informations"><InfoIcon /></StatusButton>
        <StatusButton aria-label="Déconnexion"><PowerIcon /></StatusButton>
      </StatusActions>
    </Status>
  </Header>
);

/* ------------------------------------------------------------------ */
/* Chart                                                               */
/* ------------------------------------------------------------------ */

const UP = "#5f8a69";
const DOWN = "#e39a07";

const toPoints = (points: Point[]) => points.map(([x, y]) => `${x},${y}`).join(" ");
const topPercent = (y: number) => `${((y - PLOT_TOP) / PLOT_HEIGHT) * 100}%`;
const leftPercent = (x: number, origin: number) => `${((x - origin) / PLOT_WIDTH) * 100}%`;

const ChartDrawing = ({ data }: { data: ChartData }) => {
  const left = data.originX;
  const right = left + PLOT_WIDTH;
  const half = (data.bodyWidth - 1) / 2;
  return (
    <PlotDrawing viewBox={`${left} ${PLOT_TOP} ${PLOT_WIDTH} ${PLOT_HEIGHT}`} preserveAspectRatio="none" role="img" aria-label={data.title}>
      {data.candles.map(([x, up, high, top, bottom, low]) => (
        <g key={x} fill={up ? UP : DOWN}>
          <rect x={x} y={high} width={1} height={low - high} />
          <rect x={x - half} y={top} width={data.bodyWidth} height={bottom - top} />
        </g>
      ))}
      {data.levels.map((level) => (
        <rect key={level.y} x={level.from} y={level.y - 1} width={right - level.from} height={2} fill={level.color} />
      ))}
      {data.zone && (
        <rect {...data.zone} fill="rgba(0, 200, 60, 0.07)" stroke="#00f500" strokeWidth={2} strokeDasharray="2 2" />
      )}
      {data.wave && (
        <line x1={data.wave.from[0]} y1={data.wave.from[1]} x2={data.wave.to[0]} y2={data.wave.to[1]} stroke="#9dfafa" strokeWidth={2} />
      )}
      <g fill="none" strokeWidth={2}>
        <polyline points={toPoints(data.fast)} stroke="#088008" strokeDasharray="5 5" />
        <polyline points={toPoints(data.medium)} stroke="#ff0808" strokeDasharray="5 5" />
        <polyline points={toPoints(data.slow)} stroke="#000" />
      </g>
      {data.dashed.map((level) => (
        <line key={level.y} x1={level.from} x2={right} y1={level.y} y2={level.y} stroke={level.color} strokeWidth={2} strokeDasharray="5 5" />
      ))}
      <rect x={left} y={data.currentY} width={PLOT_WIDTH} height={1} fill="#ee1c10" />
      <line x1={left + 102} x2={right} y1={data.previousY + 0.5} y2={data.previousY + 0.5} stroke="#d40000" strokeDasharray="2 2" />
    </PlotDrawing>
  );
};

const ChartPanel = ({ data }: { data: ChartData }) => (
  <Panel>
    <TabBar>
      <TabMenuButton aria-label="Menu"><HamburgerIcon /></TabMenuButton>
      <Tab>
        <TrendIcon />
        {data.title}
        <SearchIcon color="#77797b" size={15} />
      </Tab>
      <AddTabButton aria-label="Nouvel onglet"><PlusIcon size={10} color="#88898b" /></AddTabButton>
      <Spacer />
      <Change>
        <ChangePercent>
          <Icon w={9} h={9} color="none"><path d="M4.500 0L9 9H0z" fill="#1d5c12" /></Icon>
          1,09 %
        </ChangePercent>
        <div>216,41</div>
      </Change>
      <Quote>
        <QuoteButton $side="sell">20 043,53</QuoteButton>
        <QuoteButton $side="buy">20 044,53</QuoteButton>
        <Spread>1,00</Spread>
      </Quote>
      <WindowTools $width={data.axisWidth}>
        <SignalMeter on={data.signalOn} />
        <WindowButton aria-label="Agrandir"><ExpandIcon /></WindowButton>
        <WindowButton aria-label="Détacher"><PopOutIcon /></WindowButton>
        <WindowButton aria-label="Fermer"><CloseIcon /></WindowButton>
      </WindowTools>
    </TabBar>

    <Toolbar>
      <IconCell $width={32} aria-label="Détails"><DetailsIcon /></IconCell>
      <IconCell $width={33} aria-label="Disposition"><LayoutIcon /></IconCell>
      <TextCell $width={85}>{data.interval}</TextCell>
      <ShortcutCell $width={23}>5m</ShortcutCell>
      <ShortcutCell $width={28}>15m</ShortcutCell>
      <TextCell $width={90}>{data.range}</TextCell>
      <ShortcutCell $width={27}>SLS</ShortcutCell>
      <ShortcutCell $width={23}>3J</ShortcutCell>
      <ShortcutCell $width={23}>1S</ShortcutCell>
      <ActionCell><SlidersIcon />Modèles</ActionCell>
      {[1, 2, 3, 4, 5].map((n) => (
        <ShortcutCell key={n} $width={23}>{n}</ShortcutCell>
      ))}
      <ActionCell><CandlesIcon />Achat</ActionCell>
      <ActionCell><EyeIcon />Lié</ActionCell>
      <Spacer />
      <SettingsSlot $width={data.axisWidth}>
        <button aria-label="Paramètres du graphique"><CogOutlineIcon /></button>
      </SettingsSlot>
    </Toolbar>

    <DateStrip $accent={data.accent}>
      <DateTrack>
        {data.dates.map((date) => (
          <DateTick key={date.text} $height={data.labelHeight} style={{ left: leftPercent(date.x, data.originX) }}>
            {date.text}
          </DateTick>
        ))}
        <CursorDate>{data.cursorDate}</CursorDate>
      </DateTrack>
      <AxisCorner $width={data.axisWidth} />
    </DateStrip>

    <ChartBody $accent={data.accent}>
      <Plot>
        <ChartDrawing data={data} />
        <ChangeNote style={{ top: topPercent(data.previousY - 6) }}>215,91 / 1,09 %</ChangeNote>
        {data.wave && (
          <WaveNote style={{ left: leftPercent(data.wave.to[0] - 4, data.originX), top: topPercent(data.wave.to[1] - 16) }}>
            {data.wave.text}
          </WaveNote>
        )}
        <Marker width="13" height="14" viewBox="0 0 13 14" style={{ left: leftPercent(data.markerX - 6, data.originX) }}>
          <path d="M6.500 1L12 7v6.500H1V7z" fill="#b9b9b9" stroke="#55585a" />
        </Marker>
      </Plot>
      <Axis $accent={data.accent} $width={data.axisWidth}>
        {data.axis.map((tag) => (
          <Tag key={tag.text} $kind={tag.kind} style={{ top: topPercent(tag.y - Math.floor(tagHeights[tag.kind] / 2)) }}>
            {tag.text}
          </Tag>
        ))}
      </Axis>
    </ChartBody>

    <BottomBar>
      <BottomIcon aria-label="Rétablir"><RedoIcon /></BottomIcon>
      <BottomIcon aria-label="Effacer"><BlockIcon /></BottomIcon>
      <BottomIcon $on aria-label="Dessiner"><PencilIcon /></BottomIcon>
      <BottomIcon $on aria-label="Échelle automatique"><UpDownIcon /></BottomIcon>
      <Spacer />
      <BottomTabs>
        <BottomTab $spread>Favoris<StarIcon /></BottomTab>
        <BottomTab>Période</BottomTab>
        <BottomTab>Outils De Dessin</BottomTab>
        <BottomTab>Indicateurs</BottomTab>
        <BottomTab>Figures</BottomTab>
      </BottomTabs>
      <Spacer />
      <BottomIcon aria-label="Ajuster"><FitIcon /></BottomIcon>
      <BottomIcon aria-label="Zoom arrière"><MinusIcon /></BottomIcon>
      <BottomIcon aria-label="Zoom avant"><PlusIcon size={11} color="#6d6f72" /></BottomIcon>
      <BottomIcon $on aria-label="Réticule"><CrosshairIcon /></BottomIcon>
      <BottomIcon $on $width={data.axisWidth - 54} aria-label="Séparer"><SplitIcon /></BottomIcon>
    </BottomBar>
  </Panel>
);

export default function App() {
  return (
    <>
      <GlobalStyle />
      <Page>
        <TopBar />
        <Workspace>
          <ChartPanel data={weekly} />
          <ChartPanel data={daily} />
        </Workspace>
      </Page>
    </>
  );
}
